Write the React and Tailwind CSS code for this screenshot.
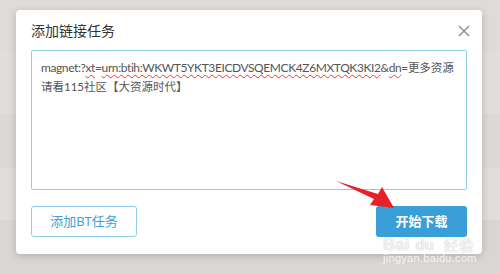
export default function App() {
  return (
    <div className="relative w-[500px] h-[274px] overflow-hidden bg-[#dbd8d5] font-['Open_Sans','Noto_Sans_CJK_SC',sans-serif]">
      <div className="absolute inset-0 flex flex-col">
        <div className="h-[52px] bg-[#dedbd8]" />
        <div className="h-[62px] bg-[#e1dedb]" />
        <div className="h-[54px] bg-[#dcd9d6]" />
        <div className="h-[52px] bg-[#e0ddda]" />
        <div className="flex-1 bg-[#d9d6d3]" />
      </div>

      <div className="relative mt-[10px] ml-[16px] w-[466px] h-[244px] bg-white rounded-[4px] shadow-[0_2px_8px_rgba(0,0,0,0.18)] px-[15px] flex flex-col">
        <div className="flex items-center justify-between h-[40px] pt-[1px]">
          <span className="text-[14px] text-[#333]">添加链接任务</span>
          <svg width="12" height="12" viewBox="0 0 12 12" className="mr-[-3px]">
            <path d="M1 1L11 11M11 1L1 11" stroke="#888" strokeWidth="1.4" />
          </svg>
        </div>
        <div className="h-[140px] border border-[#8fcbec] rounded-[2px] px-[9px] pt-[7px] text-[12px] leading-[19px] text-[#555] whitespace-nowrap font-['Lato','Noto_Sans_CJK_SC',sans-serif]">
          <div>
            <span className="tracking-[-0.4px]">
              magnet:?<span className="underline decoration-wavy decoration-[#e53935] decoration-1 underline-offset-2">xt</span>=<span className="underline decoration-wavy decoration-[#e53935] decoration-1 underline-offset-2">urn:btih:WKWT5YKT3EICDVSQEMCK4Z6MXTQK3KI2</span>&amp;<span className="underline decoration-wavy decoration-[#e53935] decoration-1 underline-offset-2">dn</span>=
            </span>
            <span className="text-[11.5px]">更多资源</span>
          </div>
          <div className="text-[11.5px]">请看115社区【大资源时代】</div>
        </div>
        <div className="flex justify-between mt-[16px]">
          <button className="w-[106px] h-[31px] border border-[#8fcbec] rounded-[3px] text-[13px] text-[#3a9fd6] bg-white">添加BT任务</button>
          <button className="w-[91px] h-[31px] rounded-[3px] text-[13px] font-bold text-white bg-[#3a9fd6]">开始下载</button>
        </div>
      </div>

      <svg className="absolute left-0 top-0" width="500" height="274" viewBox="0 0 500 274">
        <path d="M336 181 L378 194 L382 187 L394 208 L370 205 L374 199 Z" fill="#e8202a" />
      </svg>

      <div className="absolute left-[383px] top-[236px] flex items-center gap-[3px] text-white/80 leading-none font-['Liberation_Sans',sans-serif] [text-shadow:0_0_1px_rgba(0,0,0,0.3)]">
        <span className="text-[17px] font-bold">Bai</span>
        <span className="text-[15px] font-bold bg-white/40 rounded-full px-[3px]">du</span>
        <span className="text-[15px] ml-[4px] font-['Noto_Sans_CJK_SC',sans-serif]">经验</span>
      </div>
      <div className="absolute left-[383px] top-[253px] text-white/80 text-[11px] tracking-[0.3px] leading-none font-['Liberation_Sans',sans-serif]">jingyan.baidu.com</div>
    </div>
  )
}
